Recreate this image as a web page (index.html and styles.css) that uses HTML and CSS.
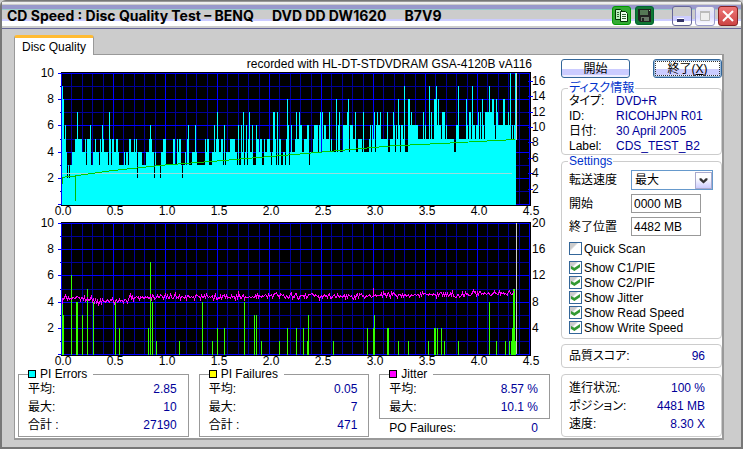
FILE: index.html
```html
<!DOCTYPE html>
<html lang="ja">
<head>
<meta charset="utf-8">
<title>CD Speed : Disc Quality Test</title>
<link rel="stylesheet" href="styles.css">
</head>
<body>
<div class="window">
  <header class="titlebar">
    <h1 class="title"><span>CD Speed : Disc Quality Test – BENQ</span><span>DVD DD DW1620</span><span>B7V9</span></h1>
    <div class="tools">
      <button class="tool tool-copy" type="button" aria-label="Copy">
        <svg viewBox="0 0 17 17"><path d="M2.500 2.500h5l2 2v8h-7z" fill="#beb" stroke="#030"/><path d="M7.500 4.500h5l2 2v8h-7z" fill="#efe" stroke="#030"/><path d="M4 5.500h2M4 7.500h2M4 9.500h2M9 7.500h4M9 9.500h4M9 11.500h4" stroke="#363"/></svg>
      </button>
      <button class="tool tool-save" type="button" aria-label="Save">
        <svg viewBox="0 0 17 17"><path d="M2 2h13v13H4l-2-2z" fill="#222"/><path d="M4 3h8v5H4z" fill="#575"/><path d="M5 10h8v4H5z" fill="#676"/><path d="M6 11h2v3H6z" fill="#222"/><path d="M13 3h1v1h-1z" fill="#9c9"/></svg>
      </button>
    </div>
    <div class="tools controls">
      <button class="ctl" type="button" aria-label="Minimize"><svg viewBox="0 0 18 18"><path d="M4 12h7v3H4z" fill="#336"/><path d="M4 11h7v1H4z" fill="#fff"/></svg></button>
      <button class="ctl ctl-max" type="button" aria-label="Maximize"><svg viewBox="0 0 18 18"><path d="M4.500 4.500h9v9h-9z" fill="#eee" stroke="#bbb"/><path d="M4 4h10v2H4z" fill="#bbb"/></svg></button>
      <button class="ctl ctl-close" type="button" aria-label="Close"><svg viewBox="0 0 18 18"><path d="M4 4l10 10M14 4L4 14" stroke="#fff" stroke-width="2"/></svg></button>
    </div>
  </header>

  <main class="content">
    <div class="tabs"><button class="tab" type="button">Disc Quality</button></div>
    <div class="panel">
      <section class="main">
        <p class="caption">recorded with HL-DT-STDVDRAM GSA-4120B vA116</p>
        <svg class="chart" id="errors" viewBox="-46 -2 542 150" role="img" aria-label="PI Errors"></svg>
        <svg class="chart" id="failures" viewBox="-46 -2 542 148" role="img" aria-label="PI Failures"></svg>
        <div class="stats">
          <fieldset class="stat">
            <legend><i class="swatch cyan"></i>PI Errors</legend>
            <dl class="rows">
              <div><dt>平均:</dt><dd>2.85</dd></div>
              <div><dt>最大:</dt><dd>10</dd></div>
              <div><dt>合計 :</dt><dd>27190</dd></div>
            </dl>
          </fieldset>
          <fieldset class="stat">
            <legend><i class="swatch yellow"></i>PI Failures</legend>
            <dl class="rows">
              <div><dt>平均:</dt><dd>0.05</dd></div>
              <div><dt>最大:</dt><dd>7</dd></div>
              <div><dt>合計 :</dt><dd>471</dd></div>
            </dl>
          </fieldset>
          <div>
            <fieldset class="stat">
              <legend><i class="swatch magenta"></i>Jitter</legend>
              <dl class="rows">
                <div><dt>平均:</dt><dd>8.57 %</dd></div>
                <div><dt>最大:</dt><dd>10.1 %</dd></div>
              </dl>
            </fieldset>
            <dl class="rows outside"><div><dt>PO Failures:</dt><dd>0</dd></div></dl>
          </div>
        </div>
      </section>

      <aside class="side">
        <div class="actions">
          <button class="btn" type="button">開始</button>
          <button class="btn btn-focus" type="button">終了(<u>X</u>)</button>
        </div>
        <fieldset class="group">
          <legend>ディスク情報</legend>
          <dl class="info">
            <dt>タイプ:</dt><dd>DVD+R</dd>
            <dt>ID:</dt><dd>RICOHJPN R01</dd>
            <dt>日付:</dt><dd>30 April 2005</dd>
            <dt>Label:</dt><dd>CDS_TEST_B2</dd>
          </dl>
        </fieldset>
        <fieldset class="group settings">
          <legend>Settings</legend>
          <div class="fields">
            <label for="speed">転送速度</label>
            <span class="picker"><select id="speed"><option>最大</option></select><svg class="arrow" viewBox="0 0 17 17" aria-hidden="true"><path d="M4 6h2l2.500 2.500L11 6h2v2l-4.500 4L4 8z" fill="#333"/></svg></span>
            <label for="from">開始</label><input class="text" id="from" value="0000 MB">
            <label for="to">終了位置</label><input class="text" id="to" value="4482 MB">
          </div>
          <div class="checks">
            <label class="quick"><input type="checkbox">Quick Scan</label>
            <label><input type="checkbox" checked>Show C1/PIE</label>
            <label><input type="checkbox" checked>Show C2/PIF</label>
            <label><input type="checkbox" checked>Show Jitter</label>
            <label><input type="checkbox" checked>Show Read Speed</label>
            <label><input type="checkbox" checked>Show Write Speed</label>
          </div>
        </fieldset>
        <dl class="group rows score"><div><dt>品質スコア:</dt><dd>96</dd></div></dl>
        <dl class="group rows progress">
          <div><dt>進行状況:</dt><dd>100 %</dd></div>
          <div><dt>ポジション:</dt><dd>4481 MB</dd></div>
          <div><dt>速度:</dt><dd>8.30 X</dd></div>
        </dl>
      </aside>
    </div>
  </main>
</div>
<script src="charts.js"></script>
</body>
</html>
```
FILE: styles.css
```css
* { box-sizing: border-box; }

body {
  margin: 0;
  background: #ccc;
  color: #000;
  font: 12px/14px "Liberation Sans", "Noto Sans CJK JP", sans-serif;
  font-feature-settings: "palt";
}

button, input, select { font: inherit; color: inherit; font-feature-settings: inherit; }
button { padding: 0; cursor: pointer; }
dl, dd, p, h1 { margin: 0; }
fieldset { margin: 0; min-width: 0; }

.window {
  display: flex;
  flex-direction: column;
  min-height: 100vh;
  border: 2px solid #777;
  border-top-width: 1px;
  border-radius: 6px 6px 0 0;
  background: #ccc;
}

.titlebar {
  display: flex;
  align-items: center;
  gap: 18px;
  height: 28px;
  padding: 2px 3px 0 5px;
  border-bottom: 1px solid #669;
  background: linear-gradient(#999 0 1px, #eee 1px 3px, #ccc 3px 4px, #99c 4px 8px, #9cc 8px 9px, #ccc 9px 18px, #ccf 18px 20px, #fff 20px 25px, #ccc 25px);
}

.title {
  display: flex;
  flex: 1;
  gap: 18px;
  font-family: Inter, sans-serif;
  font-size: 14px;
  line-height: 16px;
  white-space: nowrap;
}

.tools { display: flex; gap: 4px; }
.controls { gap: 3px; }

.tool, .ctl {
  width: 19px;
  height: 19px;
  border: 1px solid #063;
  border-radius: 3px;
}
.tool svg, .ctl svg { display: block; width: 100%; height: 100%; }
.tool-copy { background: #3a3; border-color: #090; }
.tool-save { background: #173; }
.ctl { width: 20px; height: 20px; border-color: #669; background: linear-gradient(#ccc 0 9px, #ccf 9px 14px, #fff 14px); }
.ctl-max { border-color: #99c; background: linear-gradient(#eee, #ddf 10px, #fff); }
.ctl-close { border-color: #822; background: linear-gradient(#e77, #c44); }

.content { display: flex; flex-direction: column; flex: 1; padding: 6px 17px 7px 12px; }
.tabs { display: flex; }
.tab {
  height: 20px;
  padding: 0 7px;
  border: 1px solid #999;
  border-top: 3px solid #fb3;
  border-bottom: 0;
  border-radius: 3px 3px 0 0;
  background: #fff;
  margin-bottom: -1px;
  z-index: 1;
}

.panel {
  display: grid;
  grid-template-columns: minmax(0, 1fr) 161px;
  gap: 4px;
  flex: 1;
  padding-top: 3px;
  border: 1px solid #999;
  border-right-width: 2px;
  border-bottom-width: 2px;
  background: #fff;
}

.caption { padding-right: 25px; line-height: 12px; text-align: right; white-space: nowrap; }
.chart { display: block; width: 100%; overflow: visible; }
.chart text { font-size: 12px; }

.stats {
  display: grid;
  grid-template-columns: repeat(3, minmax(0, 1fr));
  gap: 10px;
  padding: 0 7px 0 3px;
}
.stat { padding: 0 9px 2px; border: 1px solid #999; }
.stat legend { display: flex; align-items: center; gap: 4px; padding: 0 6px 0 0; line-height: 12px; }
.swatch { width: 8px; height: 8px; border: 1px solid #000; }
.cyan { background: #0ff; }
.yellow { background: #ff0; }
.magenta { background: #f0f; }

.rows div { display: flex; justify-content: space-between; line-height: 18px; }
.rows dd { padding-right: 2px; }
dd { color: #009; }
.outside { padding: 0 10px; }

.actions { display: flex; justify-content: space-between; }
.btn {
  width: 69px;
  height: 19px;
  margin-top: 1px;
  border: 1px solid #369;
  border-radius: 3px;
  background: linear-gradient(#fff 0 9px, #ccf 9px 15px, #eef 15px);
  line-height: 16px;
}
.btn-focus { outline: 1px dotted #333; outline-offset: -3px; box-shadow: inset 0 0 0 1px #9bd; }

.group { padding: 0 7px; border: 1px solid #ccc; border-radius: 4px; }
.side .group { margin-top: 4px; }
.group legend { padding: 0 1px; line-height: 12px; color: #03c; margin-left: -1px; }
.info { display: grid; grid-template-columns: 47px 1fr; line-height: 15px; white-space: nowrap; }
.side .settings { margin-top: 0; }

.fields { display: grid; grid-template-columns: 62px 82px; row-gap: 4px; align-items: center; padding-top: 3px; }
.picker { display: grid; align-items: center; height: 20px; }
.picker select, .picker svg { grid-area: 1 / 1; }
.picker select { appearance: none; width: 82px; height: 20px; padding: 0 3px; border: 1px solid #69c; border-radius: 0; background: #fff; }
.arrow { justify-self: end; width: 17px; height: 17px; margin-right: 1px; border: 1px solid #aac; background: linear-gradient(#fff 0 5px, #ccf); pointer-events: none; }
.text { width: 70px; height: 19px; padding: 0 2px; border: 1px solid #999; }

.checks { display: grid; padding: 5px 0 3px; }
.checks label { display: flex; align-items: center; gap: 2px; height: 15px; }
.checks .quick { margin-bottom: 4px; }
.checks input {
  appearance: none;
  width: 13px;
  height: 13px;
  margin: 0;
  border: 1px solid #369;
  background: linear-gradient(135deg, #ccc 0 30%, #fff 40%);
  display: grid;
  place-items: center;
}
.checks input:checked::after {
  content: "";
  width: 9px;
  height: 7px;
  background: #393;
  clip-path: polygon(0 28%, 38% 55%, 100% 0, 100% 48%, 38% 100%, 0 72%);
}
.side .score { margin-top: 5px; padding: 2px 14px 2px 7px; }
.side .progress { margin-top: 6px; padding: 4px 14px 3px 7px; }
```
FILE: charts.js
```js
const NS = "http://www.w3.org/2000/svg";
const UNIT = 13.1;
const BASE = 132;
const END = 455;

function add(svg, tag, attrs, text) {
  const node = document.createElementNS(NS, tag);
  for (const key in attrs) node.setAttribute(key, attrs[key]);
  if (text !== undefined) node.textContent = text;
  svg.appendChild(node);
}

function randomizer(seed) {
  return () => {
    seed = (seed * 1664525 + 1013904223) % 4294967296;
    return seed / 4294967296;
  };
}

const line = (svg, d, stroke, width = 1) =>
  add(svg, "path", { d, stroke, "stroke-width": width, fill: "none", "shape-rendering": "crispEdges" });

function frame(svg) {
  add(svg, "rect", { x: 0, y: 0, width: 470, height: 134, fill: "#000" });
  let minor = "", major = "";
  for (let i = 0; i <= 45; i++) {
    const x = Math.round(i * 10.4) + 0.5;
    if (i % 5) minor += `M${x} 1V133`; else major += `M${x} 1V133`;
  }
  for (let i = 0; i <= 10; i++) {
    const y = Math.round(BASE - i * UNIT) + 0.5;
    if (i % 2) minor += `M-1 ${y}H468`; else major += `M-3 ${y}H468`;
  }
  line(svg, minor, "#009");
  line(svg, major, "#00f");
  for (let i = 1; i <= 5; i++)
    add(svg, "text", { x: -7, y: BASE - i * 2 * UNIT + 4, "text-anchor": "end" }, i * 2);
  for (let i = 0; i <= 9; i++)
    add(svg, "text", { x: 2 + i * 52, y: 143, "text-anchor": "middle" }, (i / 2).toFixed(1));
}

function bars(svg, list, color) {
  let d = "";
  for (const [x, level] of list) d += `M${x + 0.5} ${BASE + 1}V${Math.round(BASE - level * UNIT)}`;
  line(svg, d, color);
}

/* PI errors: background level with its recorded peaks and dips */
const errors = document.getElementById("errors");
frame(errors);
const peaks = { 1: 9, 2: 8, 3: 5, 4: 6, 5: 4, 6: 2, 7: 3, 8: 2, 9: 3, 10: 3, 16: 7, 29: 6, 41: 6, 48: 7, 76: 2, 89: 6, 93: 2, 99: 2, 121: 2, 127: 6, 134: 6, 153: 6, 156: 7, 163: 6, 177: 6, 180: 6, 182: 7, 185: 6, 188: 7, 191: 6, 195: 6, 212: 7, 213: 7, 216: 7, 226: 8, 227: 6, 230: 6, 235: 7, 238: 7, 248: 3, 259: 7, 261: 7, 268: 7, 275: 8, 278: 7, 286: 7, 287: 8, 294: 7, 302: 7, 313: 7, 316: 7, 319: 7, 326: 7, 332: 7, 337: 8, 343: 9, 347: 8, 348: 8, 350: 7, 362: 7, 368: 9, 370: 7, 373: 8, 374: 8, 375: 9, 377: 8, 381: 7, 382: 7, 383: 7, 397: 9, 405: 8, 408: 7, 409: 7, 411: 9, 417: 7, 419: 7, 421: 8, 424: 7, 425: 7, 426: 7, 427: 7, 428: 9, 429: 7, 430: 7, 431: 8, 432: 8, 435: 8, 436: 7, 442: 8, 443: 8, 447: 7, 449: 10, 454: 10 };
const rnd = randomizer(41);
const columns = [];
let run = 0, level = 5;
for (let x = 1; x < END; x++) {
  if (run-- <= 0) {
    const r = rnd();
    if (x < 150) level = r < 0.32 ? 3 : r < 0.72 ? 4 : 5;
    else if (x < 235) level = r < 0.24 ? 3 : r < 0.55 ? 4 : 5;
    else if (x < 315) level = r < 0.4 ? 4 : r < 0.72 ? 5 : 6;
    else if (x < 420) level = r < 0.14 ? 4 : r < 0.66 ? 5 : 6;
    else level = r < 0.35 ? 5 : 6;
    run = Math.floor(rnd() * 2);
  }
  columns.push([x, peaks[x] || level]);
}
bars(errors, columns, "#0ff");
line(errors, "M1 101.500H451", "#9dd");
line(errors, "M455.500 1V68", "#ccc");
line(errors, "M4 104.500H12L20 103L52 98.500L104 93L156 89L209 84.500L239 82L329 74L389 71L454 67.500", "#0c0");
line(errors, "M1.500 112V105H4M14.500 103V129", "#0b0");
for (let i = 1; i <= 8; i++) {
  const y = BASE - i * 15.4;
  line(errors, `M467 ${Math.round(y) + 0.5}h5`, "#00f");
  add(errors, "text", { x: 471, y: y + 4 }, i * 2);
}

/* PI failures with the jitter trace */
const failures = document.getElementById("failures");
frame(failures);
bars(failures, [[1, 4], [2, 3], [10, 6], [15, 4], [16, 4], [21, 3], [26, 5], [32, 4], [54, 4], [58, 2], [87, 2], [89, 7], [91, 4], [95, 1], [118, 1], [141, 4], [151, 1], [156, 2], [163, 2], [183, 4], [193, 3], [195, 3], [200, 1], [218, 1], [226, 2], [235, 2], [242, 2], [246, 1], [247, 3], [272, 1], [306, 2], [312, 2], [313, 3], [326, 2], [327, 2], [337, 1], [347, 1], [367, 1], [373, 2], [374, 2], [376, 2], [380, 2], [383, 1], [397, 1], [428, 4], [435, 1], [444, 1], [448, 1], [450, 1], [451, 2], [452, 5], [453, 5], [454, 1]], "#3f0");
const noise = randomizer(7);
const trend = [[0, 75], [20, 76], [40, 79], [55, 78], [70, 76], [110, 74], [170, 75], [230, 73], [290, 74], [380, 72], [454, 71]];
let trace = "M1.500 82";
for (let x = 1, k = 0; x < 454; x++) {
  while (x > trend[k + 1][0]) k++;
  const [x0, y0] = trend[k], [x1, y1] = trend[k + 1];
  const y = y0 + (y1 - y0) * (x - x0) / (x1 - x0) + (noise() + noise() - 1) * 4;
  trace += `L${x + 0.5} ${Math.round(y) + 0.5}`;
}
line(failures, trace, "#f0f");
line(failures, "M312.500 74V66M177.500 75V69", "#f0f");
line(failures, "M455.500 1V132", "#ccc");
for (let i = 1; i <= 5; i++)
  add(failures, "text", { x: 471, y: BASE - i * 2 * UNIT + 4 }, i * 4);
```
